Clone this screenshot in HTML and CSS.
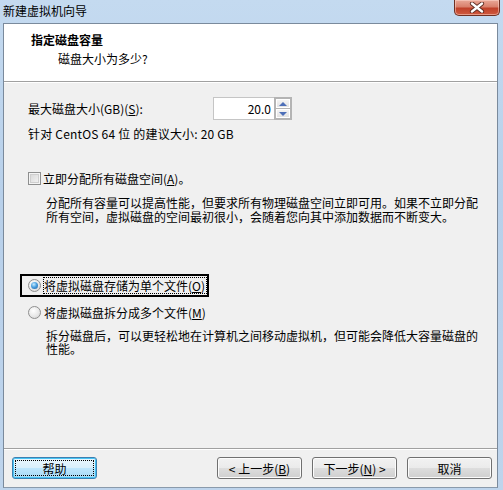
FILE: index.html
```html
<!DOCTYPE html>
<html lang="zh-CN">
<head>
<meta charset="utf-8">
<title>新建虚拟机向导</title>
<link rel="stylesheet" href="styles.css">
</head>
<body>
<div class="window">
  <div class="titlebar">
    <span class="title">新建虚拟机向导</span>
    <div class="close">
      <svg width="16" height="11" viewBox="0 0 16 11">
        <path d="M3 1.5 L13 9.5 M13 1.5 L3 9.5" stroke="#5a2a20" stroke-width="4.2" stroke-linecap="round"/>
        <path d="M3 1.5 L13 9.5 M13 1.5 L3 9.5" stroke="#ffffff" stroke-width="2.4" stroke-linecap="round"/>
      </svg>
    </div>
  </div>
  <div class="client">
    <div class="header">
      <div class="h-title">指定磁盘容量</div>
      <div class="h-sub">磁盘大小为多少?</div>
    </div>
    <div class="body">
      <div class="row-size">
        <span class="size-label">最大磁盘大小(GB)(<u>S</u>):</span>
        <div class="spin">
          <div class="spin-input">20.0</div>
          <div class="spin-btns">
            <div class="spin-btn"><span class="tri-up"></span></div>
            <div class="spin-btn"><span class="tri-down"></span></div>
          </div>
        </div>
      </div>
      <div class="hint">针对 CentOS 64 位 的建议大小: 20 GB</div>
      <div class="check-row">
        <span class="checkbox"></span>
        <span class="opt-label">立即分配所有磁盘空间(<u>A</u>)。</span>
      </div>
      <p class="desc desc1">分配所有容量可以提高性能，但要求所有物理磁盘空间立即可用。如果不立即分配所有空间，虚拟磁盘的空间最初很小，会随着您向其中添加数据而不断变大。</p>
      <div class="radio-focus">
        <span class="radio checked"></span>
        <span class="opt-label focus-label">将虚拟磁盘存储为单个文件(<u>O</u>)</span>
      </div>
      <div class="radio-row">
        <span class="radio"></span>
        <span class="opt-label">将虚拟磁盘拆分成多个文件(<u>M</u>)</span>
      </div>
      <p class="desc desc2">拆分磁盘后，可以更轻松地在计算机之间移动虚拟机，但可能会降低大容量磁盘的性能。</p>
    </div>
    <div class="footer">
      <div class="btn btn-default"><span class="btn-inner">帮助</span></div>
      <div class="btn-group">
        <div class="btn">&lt; 上一步(<u>B</u>)</div>
        <div class="btn">下一步(<u>N</u>) &gt;</div>
        <div class="btn">取消</div>
      </div>
    </div>
  </div>
</div>
</body>
</html>
```

FILE: styles.css
```css
* { box-sizing: border-box; }
html, body { margin: 0; padding: 0; }
body {
  width: 503px;
  height: 490px;
  overflow: hidden;
  font-family: "Noto Sans CJK SC", "Noto Sans", sans-serif;
  font-size: 12px;
  color: #000;
  background: #b9d1ea;
}
.window {
  width: 503px;
  height: 490px;
  background: linear-gradient(180deg, #c4daf0 0%, #b8d0ea 40%, #bed4ec 100%);
}
.titlebar {
  height: 23px;
  display: flex;
  align-items: flex-start;
  justify-content: space-between;
  padding-left: 3px;
  padding-right: 3px;
}
.title {
  line-height: 16px;
  margin-top: 3px;
  font-size: 12px;
  color: #000;
}
.close {
  width: 46px;
  height: 16px;
  border: 1px solid #6e2f22;
  border-top: none;
  border-radius: 0 0 5px 5px;
  background: linear-gradient(180deg, #e9a898 0%, #d9806c 45%, #c0412a 55%, #cf5a3f 100%);
  box-shadow: inset 0 0 0 1px rgba(255,220,210,0.5);
  display: flex;
  align-items: center;
  justify-content: center;
}
.close svg { display: block; }
.client {
  margin-left: 3px;
  width: 495px;
  height: 465px;
  border: 1px solid #7a8a9c;
  border-bottom-color: #8a9aab;
  background: #f0f0f0;
  display: flex;
  flex-direction: column;
}
.header {
  height: 58px;
  background: #fff;
  border-bottom: 1px solid #a0a0a0;
  padding: 8px 0 0 27px;
}
.h-title {
  font-weight: bold;
  line-height: 15px;
}
.h-sub {
  margin-top: 4px;
  margin-left: 27px;
  line-height: 15px;
}
.body {
  height: 366px;
  border-top: 1px solid #fff;
  padding: 14px 0 0 24px;
}
.row-size {
  display: flex;
  align-items: center;
  height: 23px;
}
.size-label {
  width: 185px;
  line-height: 15px;
}
.spin {
  display: flex;
  height: 23px;
}
.spin-input {
  width: 61px;
  height: 23px;
  border: 1px solid #c5c5c5;
  border-right: none;
  background: #fff;
  text-align: right;
  padding-right: 3px;
  line-height: 21px;
}
.spin-btns {
  width: 18px;
  height: 23px;
  border: 2px solid #b4b4b4;
  background: #b4b4b4;
  display: flex;
  flex-direction: column;
  gap: 1px;
}
.spin-btn {
  flex: 1;
  background: linear-gradient(180deg, #f4f4f4, #e2e2e2);
  border: 1px solid #fff;
  display: flex;
  align-items: center;
  justify-content: center;
}
.tri-up {
  width: 0; height: 0;
  border-left: 4px solid transparent;
  border-right: 4px solid transparent;
  border-bottom: 4px solid #4d6fb8;
}
.tri-down {
  width: 0; height: 0;
  border-left: 4px solid transparent;
  border-right: 4px solid transparent;
  border-top: 4px solid #4d6fb8;
}
.hint {
  margin-top: 6px;
  line-height: 15px;
  letter-spacing: 0.2px;
}
.check-row {
  margin-top: 30px;
  display: flex;
  align-items: center;
  height: 15px;
}
.checkbox {
  width: 13px;
  height: 13px;
  border: 1px solid #8e8f8f;
  background: linear-gradient(135deg, #d4d4d4, #f7f7f7);
  box-shadow: inset 0 0 0 1px #f4f4f4, inset 0 0 0 2px #cfcfcf;
  margin-right: 2px;
  flex: none;
}
.opt-label {
  line-height: 15px;
  white-space: nowrap;
}
.desc {
  margin: 10px 0 0 18px;
  width: 440px;
  line-height: 14px;
}
.desc2 { margin-top: 9px; line-height: 13px; }
.radio-focus {
  margin-top: 50px;
  margin-left: -8px;
  width: max-content;
  height: 23px;
  border: 2px solid #000;
  display: flex;
  align-items: center;
  padding-left: 6px;
  padding-right: 1px;
}
.radio {
  width: 13px;
  height: 13px;
  border-radius: 50%;
  border: 1px solid #8f8f8f;
  background: radial-gradient(circle at 40% 35%, #ffffff 0%, #e8e8e8 55%, #cfcfcf 100%);
  margin-right: 3px;
  flex: none;
  display: flex;
  align-items: center;
  justify-content: center;
}
.radio.checked::after {
  content: "";
  width: 7px;
  height: 7px;
  border-radius: 50%;
  background: radial-gradient(circle at 40% 35%, #c8ecff 0%, #4aa0e0 45%, #1c5a9c 100%);
}
.focus-label {
  outline: 1px dotted #000;
  outline-offset: 0;
  padding-right: 1px;
}
.radio-row {
  margin-top: 8px;
  display: flex;
  align-items: center;
  height: 15px;
}
.footer {
  height: 39px;
  border-top: 1px solid #a0a0a0;
  box-shadow: inset 0 1px 0 #fff;
  padding: 8px 5px 0 8px;
  display: flex;
  align-items: flex-start;
}
.btn-group {
  margin-left: auto;
  display: flex;
  gap: 10px;
}
.btn {
  width: 85px;
  height: 22px;
  border: 1px solid #707070;
  border-radius: 3px;
  background: linear-gradient(180deg, #f2f2f2 0%, #ebebeb 48%, #dddddd 52%, #cfcfcf 100%);
  box-shadow: inset 0 0 0 1px #fcfcfc;
  display: flex;
  align-items: center;
  justify-content: center;
  line-height: 15px;
}
.btn-default {
  border-color: #3c7fb1;
  background: linear-gradient(180deg, #eaf6fd 0%, #d9f0fc 48%, #bee6fd 52%, #a7d9f5 100%);
  box-shadow: inset 0 0 0 1px #48c4f4;
  padding: 2px;
}
.btn-inner {
  width: 100%;
  height: 100%;
  outline: 1px dotted #000;
  outline-offset: -1px;
  display: flex;
  align-items: center;
  justify-content: center;
}
u { text-decoration: underline; text-underline-offset: 1px; }
```
